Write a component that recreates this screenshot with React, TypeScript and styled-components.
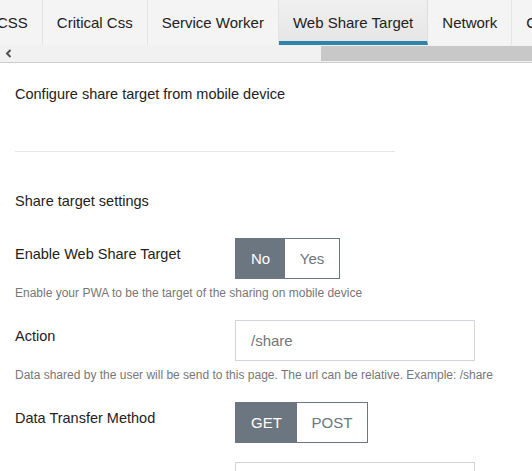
import styled, { createGlobalStyle, css } from "styled-components";

const GlobalStyle = createGlobalStyle`
  body {
    margin: 0;
    background: #ffffff;
    font-family: "Liberation Sans", Arial, sans-serif;
    color: #222222;
  }
`;

const tabs = ["CSS", "Critical Css", "Service Worker", "Web Share Target", "Network", "Cache"];

const App = () => {
  return (
    <>
      <GlobalStyle />
      <Page>
        <TabStrip>
          <TabList>
            {tabs.map((t) => (
              <Tab key={t} active={t === "Web Share Target"}>
                {t}
              </Tab>
            ))}
          </TabList>
        </TabStrip>
        <ScrollBar>
          <Arrow>
            <svg width="7" height="9" viewBox="0 0 7 9">
              <path d="M5.5 1 L2 4.5 L5.5 8" stroke="#505050" strokeWidth="2" fill="none" />
            </svg>
          </Arrow>
          <Track>
            <Thumb />
          </Track>
        </ScrollBar>

        <Content>
          <Intro>Configure share target from mobile device</Intro>
          <Divider />
          <SectionTitle>Share target settings</SectionTitle>

          <Field>
            <Row>
              <Label>Enable Web Share Target</Label>
              <Toggle>
                <ToggleOption selected wide={49}>No</ToggleOption>
                <ToggleOption wide={54}>Yes</ToggleOption>
              </Toggle>
            </Row>
            <Help>Enable your PWA to be the target of the sharing on mobile device</Help>
          </Field>

          <Field>
            <Row>
              <Label>Action</Label>
              <Input placeholder="/share" />
            </Row>
            <Help>Data shared by the user will be send to this page. The url can be relative. Example: /share</Help>
          </Field>

          <Field>
            <Row>
              <Label>Data Transfer Method</Label>
              <Toggle>
                <ToggleOption selected wide={61}>GET</ToggleOption>
                <ToggleOption wide={70}>POST</ToggleOption>
              </Toggle>
            </Row>
          </Field>

          <Field>
            <Row>
              <Label></Label>
              <Input />
            </Row>
          </Field>
        </Content>
      </Page>
    </>
  );
};

export default App;

const Page = styled.div`
  width: 532px;
  height: 471px;
  overflow: hidden;
`;

const TabStrip = styled.div`
  height: 45px;
  overflow: hidden;
  background: #f4f4f4;
`;

const TabList = styled.div`
  display: flex;
  margin-left: -17px;
  height: 45px;
`;

const Tab = styled.div<{ active?: boolean }>`
  flex: none;
  box-sizing: border-box;
  height: 45px;
  padding: 0 14px 0 14px;
  display: flex;
  align-items: center;
  font-size: 15px;
  color: #222222;
  border-right: 1px solid #e4e4e4;
  background: #f4f4f4;
  white-space: nowrap;

  ${(p) =>
    p.active &&
    css`
      background: linear-gradient(#f0f0f0, #e6e6e6);
      border-bottom: 4px solid #2f84a9;
      padding-top: 4px;
      border-right-color: #dedede;
    `}
`;

const ScrollBar = styled.div`
  display: flex;
  height: 17px;
  background: #f1f1f1;
  border-bottom: 1px solid #cdcdcd;
`;

const Arrow = styled.div`
  width: 17px;
  display: flex;
  align-items: center;
  justify-content: center;
`;

const Track = styled.div`
  flex: 1;
  display: flex;
  justify-content: flex-end;
  padding: 1px 0;
`;

const Thumb = styled.div`
  width: 211px;
  background: #c8c8c8;
`;

const Content = styled.div`
  padding: 21px 15px 0;
  font-size: 14.5px;
`;

const Intro = styled.div`
  line-height: 20px;
`;

const Divider = styled.hr`
  width: 380px;
  margin: 47px 0 0;
  border: none;
  border-top: 1px solid #e6e6e6;
`;

const SectionTitle = styled.div`
  line-height: 20px;
  margin-top: 39px;
  margin-bottom: 27px;
`;

const Field = styled.div`
  margin-bottom: 19px;
`;

const Row = styled.div`
  display: flex;
  align-items: flex-start;
`;

const Label = styled.div`
  width: 220px;
  flex: none;
  line-height: 20px;
  padding-top: 6px;
`;

const Toggle = styled.div`
  display: flex;
  height: 41px;
  box-sizing: border-box;
  border: 1px solid #6c7680;
`;

const ToggleOption = styled.div<{ selected?: boolean; wide: number }>`
  width: ${(p) => p.wide}px;
  display: flex;
  align-items: center;
  justify-content: center;
  font-size: 15px;
  color: ${(p) => (p.selected ? "#ffffff" : "#6c7680")};
  background: ${(p) => (p.selected ? "#6c7680" : "#ffffff")};
`;

const Input = styled.input`
  width: 240px;
  height: 41px;
  box-sizing: border-box;
  border: 1px solid #d3d5da;
  padding: 0 15px;
  font-family: "Liberation Sans", Arial, sans-serif;
  font-size: 15px;
  color: #555555;
  outline: none;

  ::placeholder {
    color: #777777;
  }
`;

const Help = styled.div`
  margin-top: 6px;
  font-size: 12px;
  line-height: 16px;
  color: #777777;
`;
